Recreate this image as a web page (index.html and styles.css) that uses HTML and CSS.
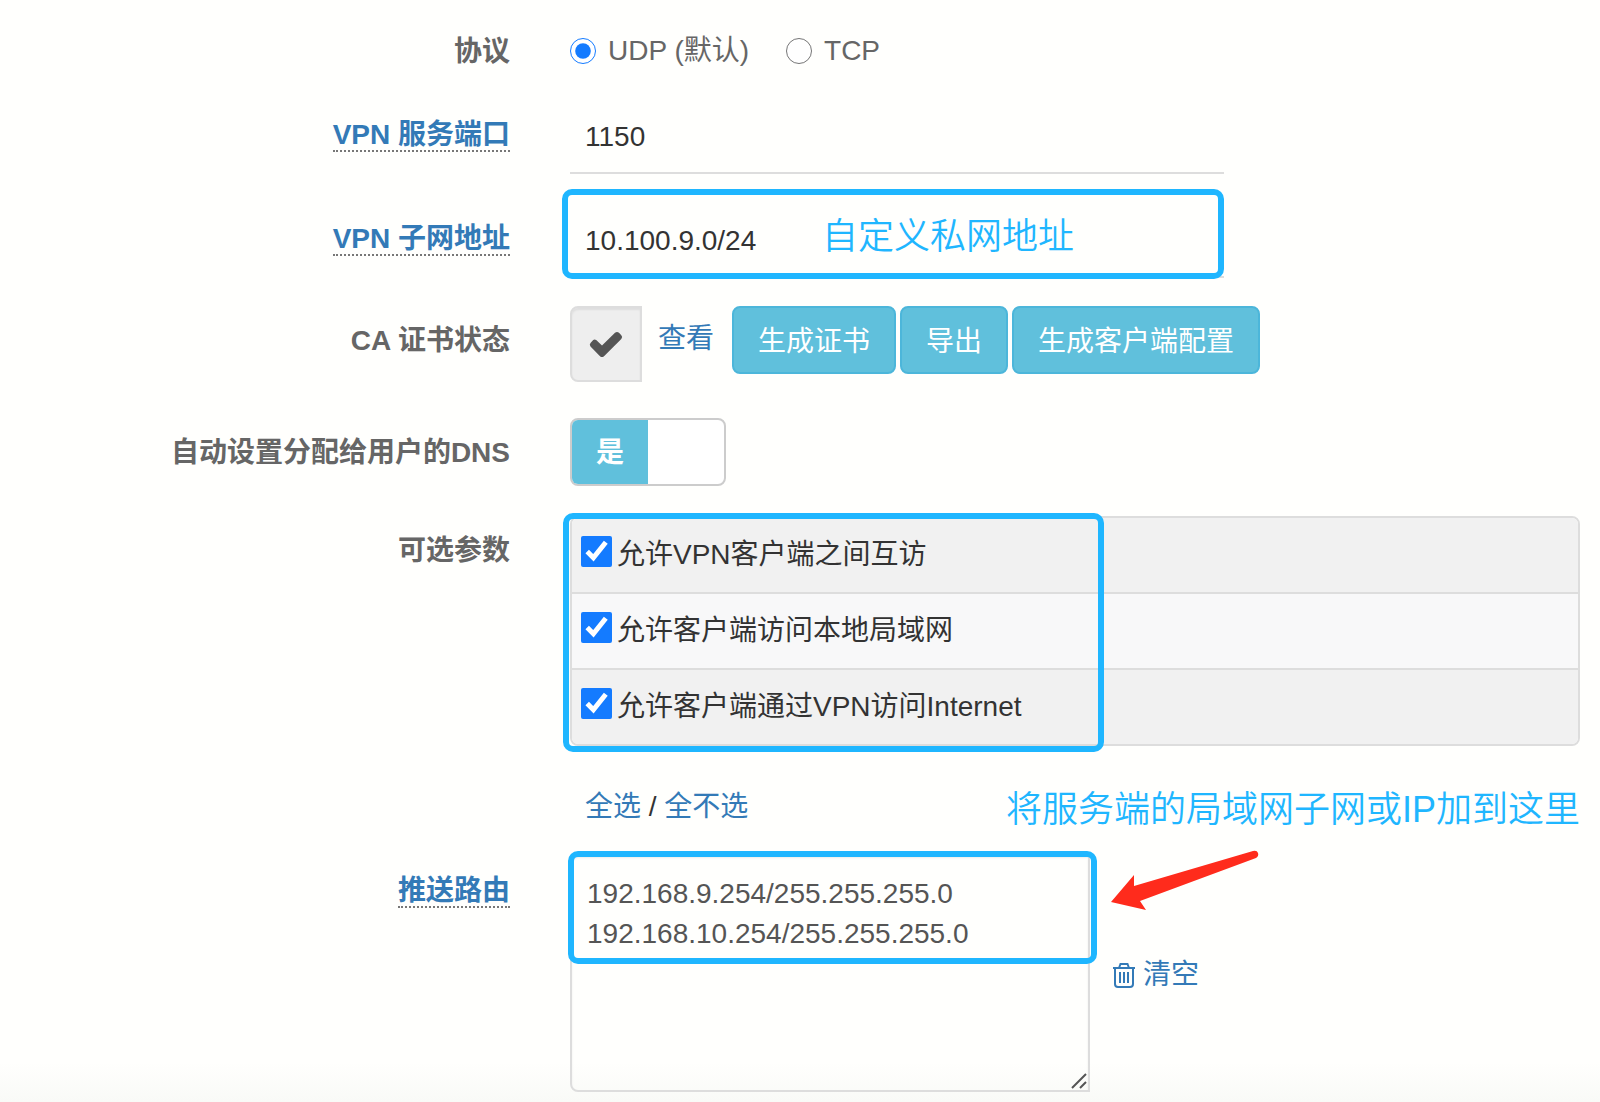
FILE: index.html
```html
<!DOCTYPE html>
<html lang="zh-CN">
<head>
<meta charset="utf-8">
<meta name="viewport" content="width=device-width, initial-scale=1">
<title>VPN 服务设置</title>
<link rel="stylesheet" href="styles.css">
</head>
<body>
<form class="form">
  <div class="row" role="radiogroup" aria-labelledby="proto-label">
    <span class="row-label row-label-flat" id="proto-label">协议</span>
    <div class="radios">
      <label class="radio"><input type="radio" name="proto" checked>UDP (默认)</label>
      <label class="radio"><input type="radio" name="proto">TCP</label>
    </div>
  </div>

  <div class="row">
    <label class="row-label" for="port"><a class="help" href="#port">VPN 服务端口</a></label>
    <div class="field"><input class="text-input" id="port" type="text" value="1150"></div>
  </div>

  <div class="row">
    <label class="row-label" for="subnet"><a class="help" href="#subnet">VPN 子网地址</a></label>
    <div class="field">
      <input class="text-input" id="subnet" type="text" value="10.100.9.0/24">
      <span class="mark mark-subnet"></span>
      <span class="note note-subnet">自定义私网地址</span>
    </div>
  </div>

  <div class="row row-cert">
    <span class="row-label">CA 证书状态</span>
    <div class="cert">
      <span class="status">
        <svg width="34" height="28" viewBox="0 0 34 28" aria-label="有效"><path d="M7.200 10 13 15.500 26 2.800Q28 1 30 2.800L32.300 5.200Q34 7 32.300 8.900L15 26.200Q13 28 11 26.200L1.500 16.600Q0 14.800 1.500 13L4.200 10Q5.500 8.800 7.200 10Z" fill="#555"/></svg>
      </span>
      <a class="link view-link" href="#view">查看</a>
      <div class="buttons">
        <button class="btn" type="button">生成证书</button>
        <button class="btn" type="button">导出</button>
        <button class="btn" type="button">生成客户端配置</button>
      </div>
    </div>
  </div>

  <div class="row row-dns">
    <label class="row-label" for="dns">自动设置分配给用户的DNS</label>
    <label class="switch"><input class="switch-input" id="dns" type="checkbox" role="switch" checked><span class="switch-on">是</span></label>
  </div>

  <div class="row" role="group" aria-labelledby="opt-label">
    <span class="row-label" id="opt-label">可选参数</span>
    <div class="options">
      <ul class="option-list">
        <li class="option"><label class="check"><input type="checkbox" checked>允许VPN客户端之间互访</label></li>
        <li class="option"><label class="check"><input type="checkbox" checked>允许客户端访问本地局域网</label></li>
        <li class="option"><label class="check"><input type="checkbox" checked>允许客户端通过VPN访问Internet</label></li>
      </ul>
      <span class="mark mark-options"></span>
      <p class="select-links"><a class="link" href="#all">全选</a> / <a class="link" href="#none">全不选</a></p>
    </div>
  </div>

  <div class="row">
    <label class="row-label" for="routes"><a class="help" href="#routes">推送路由</a></label>
    <div class="routes">
      <div class="area">
        <textarea class="textarea" id="routes">192.168.9.254/255.255.255.0
192.168.10.254/255.255.255.0</textarea>
        <svg class="grip" width="16" height="16" viewBox="0 0 16 16" aria-hidden="true"><path d="M1 15 15 1M9 15l6-6" stroke="#555" stroke-width="2" fill="none"/></svg>
        <span class="mark mark-routes"></span>
      </div>
      <a class="link clear" href="#clear">
        <svg width="24" height="26" viewBox="0 0 24 26" fill="none" stroke="currentColor" stroke-width="2" aria-hidden="true"><path d="M1 6H23M7 6 8.500 2H15.500L17 6M3 6V22Q3 25 6 25H18Q21 25 21 22V6M8 10V21M12 10V21M16 10V21"/></svg>
        清空
      </a>
      <span class="note note-routes">将服务端的局域网子网或IP加到这里</span>
      <svg class="arrow" width="148" height="62" viewBox="0 0 148 62" aria-hidden="true"><path d="M0 52 23 25V36L142 1Q146 0 147 3T145 8L29 51 35 60Z" fill="#ff2b1c"/></svg>
    </div>
  </div>
</form>
</body>
</html>
```
FILE: styles.css
```css
* {
  box-sizing: border-box;
}

body {
  margin: 0;
  min-height: 100vh;
  background: linear-gradient(to top, #f9faf7, #fffffd 40px);
  color: #333;
  font: 28px/40px "Liberation Sans", "Noto Sans CJK SC", sans-serif;
}

input,
textarea,
button {
  font: inherit;
}

.form {
  display: flex;
  flex-direction: column;
  gap: 28px;
  padding: 28px 20px 10px 0;
}

.row {
  display: grid;
  grid-template-columns: minmax(0, 51fr) minmax(0, 101fr);
  column-gap: 60px;
  align-items: start;
}

.row-cert {
  padding-bottom: 8px;
}

.row-dns {
  padding-bottom: 2px;
}

.row-label {
  padding-top: 15px;
  color: #666;
  font-weight: bold;
  text-align: right;
}

.row-label-flat {
  height: 42px;
  padding-top: 4px;
}

.help {
  display: inline-block;
  padding-top: 6px;
  border-bottom: 2px dotted #777;
  color: #337ab7;
  line-height: 31px;
  text-decoration: none;
  vertical-align: top;
}

.link {
  color: #337ab7;
  text-decoration: none;
}

.radios {
  display: flex;
  gap: 37px;
  height: 42px;
  padding-top: 3px;
  color: #666;
}

.radio {
  display: flex;
  align-items: center;
  gap: 12px;
}

.radio input {
  width: 26px;
  height: 26px;
  margin: 0;
  accent-color: #147bff;
}

.field {
  position: relative;
  width: 65%;
  max-width: 654px;
}

.text-input {
  display: block;
  width: 100%;
  height: 76px;
  padding: 4px 15px 0;
  border: 0;
  border-bottom: 2px solid #ddd;
  background: transparent;
  color: #333;
}

/* Callout frames and notes drawn over the form */
.mark {
  position: absolute;
  border: 6px solid #1fb6ff;
  border-radius: 10px;
  pointer-events: none;
}

.mark-subnet {
  inset: -13px 0 -1px -8px;
}

.mark-options {
  top: -3px;
  left: -7px;
  width: 541px;
  height: 239px;
}

.mark-routes {
  top: -3px;
  left: -2px;
  right: -7px;
  height: 113px;
}

.note {
  position: absolute;
  color: #1fb6ff;
  font-size: 36px;
  font-weight: 350;
  white-space: nowrap;
}

.note-subnet {
  top: 15px;
  left: 252px;
}

.note-routes {
  top: -64px;
  right: 0;
}

.cert {
  display: flex;
  align-items: flex-start;
}

.status {
  display: flex;
  align-items: center;
  justify-content: center;
  width: 72px;
  height: 76px;
  border: 2px solid #ddd;
  border-radius: 8px 0 0 8px;
  background: #eee;
  box-shadow: inset 0 2px 2px rgba(0, 0, 0, 0.07);
}

.view-link {
  padding: 13px 18px 0 16px;
}

.buttons {
  display: flex;
  gap: 4px;
}

.btn {
  height: 68px;
  padding: 3px 24px 0;
  border: 2px solid #4cb6da;
  border-radius: 8px;
  background: #60c0dc;
  color: #fff;
}

.switch {
  position: relative;
  display: flex;
  width: 156px;
  height: 68px;
  overflow: hidden;
  border: 2px solid #ccc;
  border-radius: 8px;
  background: #fff;
}

.switch-input {
  position: absolute;
  inset: 0;
  margin: 0;
  opacity: 0;
}

.switch-on {
  width: 50%;
  background: #60c0dc;
  color: #fff;
  font-weight: bold;
  line-height: 66px;
  text-align: center;
}

.options {
  position: relative;
}

.option-list {
  margin: 0;
  padding: 0;
  overflow: hidden;
  border: 2px solid #ddd;
  border-radius: 8px;
  list-style: none;
}

.option {
  height: 76px;
  padding: 17px 9px;
  border-bottom: 2px solid #ddd;
  background: #f1f1f1;
}

.option:nth-child(even) {
  background: #f8f8f9;
}

.option:last-child {
  height: 74px;
  border-bottom: 0;
}

.check {
  display: flex;
  align-items: flex-start;
  gap: 5px;
}

.check input {
  width: 31px;
  height: 31px;
  margin: 1px 0 0;
  accent-color: #147bff;
}

.select-links {
  margin: 42px 0 0;
  padding-left: 15px;
  line-height: 38px;
}

.routes {
  position: relative;
  display: flex;
  align-items: center;
  gap: 22px;
}

.area {
  position: relative;
  width: 520px;
}

.textarea {
  display: block;
  width: 100%;
  height: 238px;
  padding: 18px 15px;
  border: 2px solid #ddd;
  border-radius: 8px 0 0 8px;
  background: transparent;
  box-shadow: inset 0 2px 2px rgba(0, 0, 0, 0.075);
  color: #555;
  line-height: 40px;
  resize: none;
}

.grip {
  position: absolute;
  right: 3px;
  bottom: 3px;
}

.clear {
  display: flex;
  align-items: center;
  gap: 7px;
  padding-top: 4px;
}

.arrow {
  position: absolute;
  top: -4px;
  left: 541px;
  overflow: visible;
}
```
